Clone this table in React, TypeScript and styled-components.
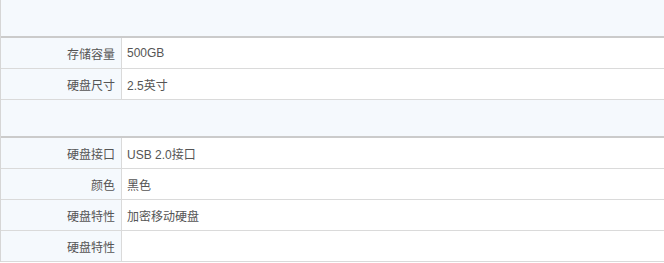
import styled, { createGlobalStyle } from "styled-components";

const GlobalStyle = createGlobalStyle`
  body {
    margin: 0;
    background: #fff;
    font-family: "Liberation Sans", Arial, "Noto Sans CJK SC", sans-serif;
    font-size: 12px;
    color: #555;
  }
`;

const Table = styled.div`
  width: 100%;
  border-left: 1px solid #d6d6d6;
`;

const GroupHead = styled.div`
  height: 36px;
  background: #f5f9fd;
  border-bottom: 2px solid #cbcbcb;
`;

const Row = styled.div`
  display: grid;
  grid-template-columns: 121px 1fr;
  height: 30px;
  border-bottom: 1px solid #dadada;
`;

const Label = styled.div`
  background: #f5f9fd;
  border-right: 1px solid #dadada;
  display: flex;
  align-items: center;
  justify-content: flex-end;
  padding-right: 6px;
  color: #555;
`;

const Value = styled.div`
  display: flex;
  align-items: center;
  padding-left: 5px;
  color: #555;
`;

type Spec = { label: string; value: string };

const groups: Spec[][] = [
  [
    { label: "存储容量", value: "500GB" },
    { label: "硬盘尺寸", value: "2.5英寸" },
  ],
  [
    { label: "硬盘接口", value: "USB 2.0接口" },
    { label: "颜色", value: "黑色" },
    { label: "硬盘特性", value: "加密移动硬盘" },
    { label: "硬盘特性", value: "" },
  ],
];

const App = () => {
  return (
    <>
      <GlobalStyle />
      <Table>
        {groups.map((rows, g) => (
          <div key={g}>
            <GroupHead />
            {rows.map((r, i) => (
              <Row key={i}>
                <Label>{r.label}</Label>
                <Value>{r.value}</Value>
              </Row>
            ))}
          </div>
        ))}
      </Table>
    </>
  );
};

export default App;
